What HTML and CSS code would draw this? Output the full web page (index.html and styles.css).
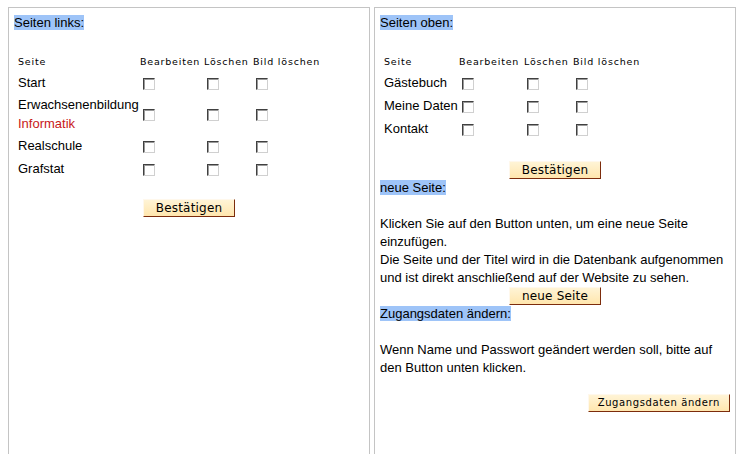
FILE: index.html
```html
<!DOCTYPE html>
<html lang="de">
<head>
<meta charset="utf-8">
<title>Seiten verwalten</title>
<link rel="stylesheet" href="styles.css">
</head>
<body>
<div class="page">
  <section class="panel">
    <div class="line"><span class="hl">Seiten links:</span></div>
    <table class="pages pages--left">
      <colgroup><col class="c1"><col class="c2"><col class="c3"><col class="c4"></colgroup>
      <tr class="head"><td class="name">Seite</td><td>Bearbeiten</td><td>Löschen</td><td>Bild löschen</td></tr>
      <tr><td class="name">Start</td><td><input type="checkbox" class="cb"></td><td><input type="checkbox" class="cb"></td><td><input type="checkbox" class="cb"></td></tr>
      <tr class="double"><td class="name">Erwachsenenbildung<br><span class="red">Informatik</span></td><td><input type="checkbox" class="cb"></td><td><input type="checkbox" class="cb"></td><td><input type="checkbox" class="cb"></td></tr>
      <tr><td class="name">Realschule</td><td><input type="checkbox" class="cb"></td><td><input type="checkbox" class="cb"></td><td><input type="checkbox" class="cb"></td></tr>
      <tr><td class="name">Grafstat</td><td><input type="checkbox" class="cb"></td><td><input type="checkbox" class="cb"></td><td><input type="checkbox" class="cb"></td></tr>
    </table>
    <div class="btnrow btnrow--center btnrow--after-left"><button class="btn">Bestätigen</button></div>
  </section>

  <section class="panel">
    <div class="line"><span class="hl">Seiten oben:</span></div>
    <table class="pages pages--top">
      <colgroup><col class="c1"><col class="c2"><col class="c3"><col class="c4"></colgroup>
      <tr class="head"><td class="name">Seite</td><td>Bearbeiten</td><td>Löschen</td><td>Bild löschen</td></tr>
      <tr><td class="name">Gästebuch</td><td><input type="checkbox" class="cb"></td><td><input type="checkbox" class="cb"></td><td><input type="checkbox" class="cb"></td></tr>
      <tr><td class="name">Meine Daten</td><td><input type="checkbox" class="cb"></td><td><input type="checkbox" class="cb"></td><td><input type="checkbox" class="cb"></td></tr>
      <tr><td class="name">Kontakt</td><td><input type="checkbox" class="cb"></td><td><input type="checkbox" class="cb"></td><td><input type="checkbox" class="cb"></td></tr>
    </table>
    <div class="btnrow btnrow--center btnrow--after-top"><button class="btn">Bestätigen</button></div>
    <div class="line"><span class="hl">neue Seite:</span></div>
    <p class="text">Klicken Sie auf den Button unten, um eine neue Seite einzufügen.<br>Die Seite und der Titel wird in die Datenbank aufgenommen und ist direkt anschließend auf der Website zu sehen.</p>
    <div class="btnrow btnrow--center"><button class="btn">neue Seite</button></div>
    <div class="line"><span class="hl">Zugangsdaten ändern:</span></div>
    <p class="text">Wenn Name und Passwort geändert werden soll, bitte auf den Button unten klicken.</p>
    <div class="btnrow btnrow--right btnrow--spaced"><button class="btn btn--small">Zugangsdaten ändern</button></div>
  </section>
</div>
</body>
</html>
```

FILE: styles.css
```css
html, body {
  margin: 0;
  padding: 0;
  overflow: hidden;
  background: #ffffff;
}

body {
  font-family: "Liberation Sans", Arial, sans-serif;
  font-size: 13px;
  color: #000000;
}

.page {
  display: grid;
  grid-template-columns: 362px 362px;
  column-gap: 4px;
  padding: 7px 8px 0 8px;
}

.panel {
  border: 1px solid #c4c4c4;
  border-bottom: none;
  height: 470px;
  padding: 6px 5px 0 5px;
  line-height: 18px;
}

.line {
  height: 18px;
  line-height: 18px;
  white-space: nowrap;
}

.hl {
  background: #9ec4f8;
}

.pages {
  border-collapse: collapse;
  border-spacing: 0;
  table-layout: fixed;
  margin-top: 20px;
}

.pages--left { width: 329px; }
.pages--left .c1 { width: 126px; }
.pages--left .c2 { width: 64px; }
.pages--left .c3 { width: 49px; }
.pages--left .c4 { width: 90px; }

.pages--top { width: 283px; }
.pages--top .c1 { width: 79px; }
.pages--top .c2 { width: 65px; }
.pages--top .c3 { width: 49px; }
.pages--top .c4 { width: 90px; }

.pages td {
  padding: 2px 0;
  line-height: 19px;
  vertical-align: middle;
  white-space: nowrap;
}

.pages .double td {
  padding: 1px 0 1px 0;
}

.pages .double td.name {
  padding-left: 4px;
}

.pages td.name {
  padding-left: 4px;
}

.pages .head td {
  height: 19px;
  padding-top: 0;
  padding-bottom: 0;
  font-family: "DejaVu Sans", Verdana, sans-serif;
  font-size: 9.5px;
  letter-spacing: 0.8px;
  line-height: 19px;
}

.red {
  color: #c81818;
}

.cb {
  -webkit-appearance: none;
  appearance: none;
  display: inline-block;
  box-sizing: border-box;
  width: 12px;
  height: 12px;
  margin: 0 0 0 3px;
  vertical-align: middle;
  background: #ffffff;
  border: 1px solid;
  border-color: #404040 #d0d0d0 #d0d0d0 #404040;
  box-shadow: inset 1px 1px 0 #9a9a9a;
  border-radius: 0;
}

.btnrow {
  height: 18px;
  line-height: 18px;
}

.btnrow--center { text-align: center; }
.btnrow--right { text-align: right; }
.btnrow--after-left { margin-top: 19px; }
.btnrow--after-top { margin-top: 21px; }
.btnrow--spaced { margin-top: 17px; }

.btn {
  box-sizing: border-box;
  height: 18px;
  margin: 0;
  padding: 0 12px;
  vertical-align: top;
  font-family: "DejaVu Sans", Verdana, sans-serif;
  font-size: 12px;
  letter-spacing: 0.2px;
  line-height: 16px;
  color: #000000;
  background: linear-gradient(#fff4d6, #ffe6ae);
  border: 1px solid;
  border-color: #fff8ec #7c2c0c #7c2c0c #fff8ec;
  border-radius: 0;
}

.btn--small {
  font-size: 10px;
  letter-spacing: 0.6px;
  padding: 0 9px;
}

.text {
  margin: 18px 0 0 0;
  line-height: 18px;
}
```
